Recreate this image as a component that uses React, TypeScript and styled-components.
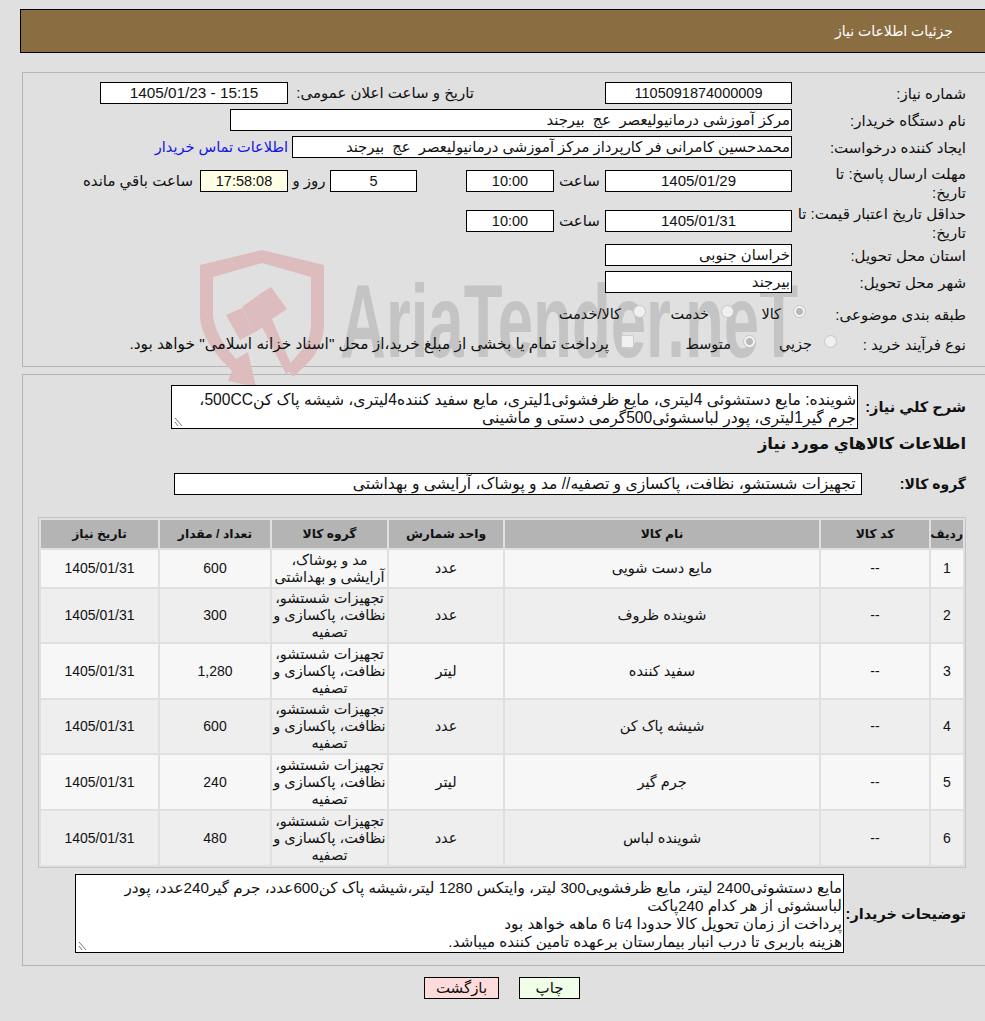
import React from "react";
import styled, { createGlobalStyle } from "styled-components";

const GlobalStyle = createGlobalStyle`
  html, body {
    margin: 0;
    padding: 0;
    background: #e0e0e0;
  }
  body {
    font-family: "Liberation Sans", "DejaVu Sans", sans-serif;
    font-size: 14.5px;
    color: #111;
  }
`;

const Page = styled.div`
  position: relative;
  width: 985px;
  height: 1021px;
  overflow: hidden;
  direction: rtl;
  padding-top: 9px;
  box-sizing: border-box;
`;

const Header = styled.header`
  height: 44px;
  margin-left: 20px;
  background: #8b6d42;
  border: 1px solid #000;
  border-right: none;
  box-sizing: border-box;
  color: #fff;
  display: flex;
  align-items: center;
  padding-right: 32px;
  font-size: 14px;
`;

const Panel = styled.section<{ $top: number; $height: number }>`
  margin: ${({ $top }) => $top}px 0 0 22px;
  height: ${({ $height }) => $height}px;
  box-sizing: border-box;
  border: 1px solid #b4b4b4;
  border-right: none;
  padding-right: 19px;
`;

const Row = styled.div<{ $top: number; $height?: number }>`
  display: flex;
  align-items: center;
  margin-top: ${({ $top }) => $top}px;
  height: ${({ $height }) => $height ?? 22}px;
`;

const Label = styled.div<{ $width?: number; $wrapped?: boolean }>`
  width: ${({ $width }) => $width ?? 174}px;
  flex: none;
  box-sizing: border-box;
  margin-top: ${({ $wrapped }) => ($wrapped ? 4 : 0)}px;
  line-height: 19px;
  font-size: 15px;
  white-space: nowrap;
`;

const BoldLabel = styled.div<{ $width: number; $size?: number }>`
  width: ${({ $width }) => $width}px;
  flex: none;
  font-weight: 700;
  font-size: ${({ $size }) => $size ?? 14.5}px;
  white-space: nowrap;
`;

const Field = styled.div<{ $width: number; $center?: boolean; $bg?: string; $mr?: number; $size?: number }>`
  width: ${({ $width }) => $width}px;
  height: 22px;
  flex: none;
  box-sizing: border-box;
  border: 1px solid #000;
  background: ${({ $bg }) => $bg ?? "#fff"};
  text-align: ${({ $center }) => ($center ? "center" : "right")};
  line-height: 20px;
  padding: 0 1px;
  margin-right: ${({ $mr }) => $mr ?? 0}px;
  font-size: ${({ $size, $center }) => $size ?? ($center ? 14.5 : 14.8)}px;
  white-space: pre;
  overflow: hidden;
`;

const Caption = styled.span<{ $width?: number; $mr?: number; $start?: boolean }>`
  flex: none;
  white-space: nowrap;
  font-size: 15px;
  width: ${({ $width }) => ($width ? `${$width}px` : "auto")};
  text-align: ${({ $start }) => ($start ? "right" : "center")};
  margin-right: ${({ $mr }) => $mr ?? 0}px;
`;

const ContactLink = styled.a`
  color: #1414e6;
  margin-right: 4px;
  font-size: 14.5px;
  white-space: nowrap;
`;

const RadioItem = styled.label<{ $width: number; $size?: number }>`
  display: flex;
  align-items: center;
  width: ${({ $width }) => $width}px;
  flex: none;
  gap: 12px;
  white-space: nowrap;
  font-size: ${({ $size }) => $size ?? 14.5}px;
`;

const RadioDot = styled.span<{ $checked?: boolean }>`
  width: 13px;
  height: 13px;
  flex: none;
  margin-bottom: 5px;
  box-sizing: border-box;
  border-radius: 50%;
  border: 1px solid #c6c6c6;
  background: ${({ $checked }) =>
    $checked ? "radial-gradient(circle, #b8b8b8 0 3px, #f2f2f2 4px)" : "#f0f0f0"};
`;

const CheckBox = styled.span`
  width: 13px;
  height: 13px;
  flex: none;
  margin-bottom: 5px;
  box-sizing: border-box;
  border-radius: 2px;
  border: 1px solid #cccccc;
  background: #f0f0f0;
`;

const Watermark = styled.svg`
  position: absolute;
  left: 180px;
  top: 235px;
  pointer-events: none;
`;

const Content = styled.div`
  position: relative;
`;

const TextBox = styled.div<{ $width: number; $height: number; $pad: number; $size: number }>`
  position: relative;
  width: ${({ $width }) => $width}px;
  height: ${({ $height }) => $height}px;
  flex: none;
  box-sizing: border-box;
  border: 1px solid #000;
  background: #fff;
  padding: ${({ $pad }) => $pad}px 1px 0;
  font-size: ${({ $size }) => $size}px;
  line-height: 18px;
  overflow: hidden;
`;

const Grip = styled.svg`
  position: absolute;
  left: 1px;
  bottom: 1px;
`;

const SectionTitle = styled.div`
  font-weight: 700;
  font-size: 16.4px;
  margin-top: 4px;
  height: 20px;
  line-height: 20px;
  white-space: nowrap;
`;

const Table = styled.table`
  margin: 22px 0 0 0;
  width: 928px;
  box-sizing: border-box;
  border: 1px solid #c4c4c4;
  border-spacing: 2px;
  table-layout: fixed;
  font-size: 14.5px;
`;

const Th = styled.th<{ $width: number }>`
  width: ${({ $width }) => $width}px;
  height: 28px;
  padding: 0;
  background: #b4b4b4;
  font-size: 12.3px;
  font-weight: 700;
`;

const Tr = styled.tr<{ $alt: boolean; $h: number }>`
  height: ${({ $h }) => $h}px;
  background: ${({ $alt }) => ($alt ? "#eeeeee" : "#f7f7f7")};
`;

const Td = styled.td<{ $size?: number }>`
  padding: 0;
  text-align: center;
  line-height: 17px;
  font-size: ${({ $size }) => $size ?? 14.5}px;
`;

const Footer = styled.div`
  display: flex;
  justify-content: center;
  gap: 20px;
  margin-top: 11px;
  padding-left: 19px;
`;

const Button = styled.button<{ $bg: string; $width: number }>`
  width: ${({ $width }) => $width}px;
  height: 22px;
  padding: 0;
  box-sizing: border-box;
  border: 1px solid #000;
  background: ${({ $bg }) => $bg};
  font: inherit;
  font-size: 15px;
  color: #111;
`;

const cleaning = "تجهیزات شستشو، نظافت، پاکسازی و تصفیه";

const items = [
  { name: "مایع دست شویی", unit: "عدد", qty: "600", group: "مد و پوشاک، آرایشی و بهداشتی", h: 37 },
  { name: "شوینده ظروف", unit: "عدد", qty: "300", group: cleaning, h: 53 },
  { name: "سفید کننده", unit: "لیتر", qty: "1,280", group: cleaning, h: 54 },
  { name: "شیشه پاک کن", unit: "عدد", qty: "600", group: cleaning, h: 53 },
  { name: "جرم گیر", unit: "لیتر", qty: "240", group: cleaning, h: 54 },
  { name: "شوینده لباس", unit: "عدد", qty: "480", group: cleaning, h: 54 },
];

const ResizeGrip = () => (
  <Grip width="11" height="11" viewBox="0 0 11 11">
    <path d="M2 2 L9 10 M2 6 L5 10" stroke="#777" fill="none" />
  </Grip>
);

const App: React.FC = () => {
  return (
    <Page>
      <GlobalStyle />
      <Watermark width="640" height="160" viewBox="0 0 640 160">
        {/* shield band with the arrow at its foot */}
        <path
          d="M20 30 L82 15 L144 30 L144 92 C142 118 128 128 113 142 L106 132 C120 118 131 108 131 88 L131 42 L82 28 L33 42 L33 80 C35 100 48 115 56 124 L68 117 L76 152 L48 146 L52 136 C38 122 20 102 20 80 Z"
          fill="#dcbcbc"
        />
        {/* gavel */}
        <path
          d="M46 80 L62 73 L75 97 L60 105 Z M62 72 L77 61 L92 87 L75 97 Z M78 60 L91 52 L107 74 L92 84 L113 134 L106 139 L82 92 Z"
          fill="#dcbcbc"
        />
        <text
          x="160"
          y="122"
          fill="#c4c4c4"
          fontFamily="'Liberation Sans', sans-serif"
          fontWeight="700"
          fontSize="103"
          textLength="458"
          lengthAdjust="spacingAndGlyphs"
          direction="ltr"
        >
          AriaTender.neT
        </text>
      </Watermark>
      <Header>جزئیات اطلاعات نیاز</Header>

      <Panel $top={19} $height={295}>
        <Content>
          <Row $top={9}>
            <Label>شماره نیاز:</Label>
            <Field $width={187} $center>1105091874000009</Field>
            <Caption $width={186} $mr={131} $start>تاریخ و ساعت اعلان عمومی:</Caption>
            <Field $width={188} $center $size={15.3}>15:15 - 1405/01/23</Field>
          </Row>
          <Row $top={5}>
            <Label>نام دستگاه خریدار:</Label>
            <Field $width={562}>مرکز آموزشی درمانیولیعصر  عج  بیرجند</Field>
          </Row>
          <Row $top={5}>
            <Label>ایجاد کننده درخواست:</Label>
            <Field $width={500}>محمدحسین کامرانی فر کارپرداز مرکز آموزشی درمانیولیعصر  عج  بیرجند</Field>
            <ContactLink>اطلاعات تماس خریدار</ContactLink>
          </Row>
          <Row $top={12}>
            <Label $wrapped>مهلت ارسال پاسخ: تا<br />تاریخ:</Label>
            <Field $width={187} $center $size={15}>1405/01/29</Field>
            <Caption $width={51}>ساعت</Caption>
            <Field $width={88} $center>10:00</Field>
            <Field $width={87} $center $mr={49}>5</Field>
            <Caption $width={42}>روز و</Caption>
            <Field $width={88} $center $bg="#ffffe6">17:58:08</Field>
            <Caption $mr={7}>ساعت باقي مانده</Caption>
          </Row>
          <Row $top={18}>
            <Label $wrapped>حداقل تاریخ اعتبار قیمت: تا<br />تاریخ:</Label>
            <Field $width={187} $center $size={15}>1405/01/31</Field>
            <Caption $width={51}>ساعت</Caption>
            <Field $width={88} $center>10:00</Field>
          </Row>
          <Row $top={12}>
            <Label>استان محل تحویل:</Label>
            <Field $width={187}>خراسان جنوبی</Field>
          </Row>
          <Row $top={5}>
            <Label>شهر محل تحویل:</Label>
            <Field $width={187}>بیرجند</Field>
          </Row>
          <Row $top={10}>
            <Label $width={160}>طبقه بندی موضوعی:</Label>
            <RadioItem $width={72}><RadioDot $checked />کالا</RadioItem>
            <RadioItem $width={88}><RadioDot />خدمت</RadioItem>
            <RadioItem $width={100}><RadioDot />کالا/خدمت</RadioItem>
          </Row>
          <Row $top={8}>
            <Label $width={129}>نوع فرآیند خرید :</Label>
            <RadioItem $width={81}><RadioDot />جزیي</RadioItem>
            <RadioItem $width={122}><RadioDot $checked />متوسط</RadioItem>
            <RadioItem $width={510} $size={15.4}><CheckBox />پرداخت تمام یا بخشی از مبلغ خرید،از محل "اسناد خزانه اسلامی" خواهد بود.</RadioItem>
          </Row>
        </Content>
      </Panel>

      <Panel $top={7} $height={592}>
        <Content>
          <Row $top={10} $height={44}>
            <BoldLabel $width={108}>شرح کلي نیاز:</BoldLabel>
            <TextBox $width={687} $height={44} $pad={5} $size={15.6}>
              شوینده: مایع دستشوئی 4لیتری، مایع ظرفشوئی1لیتری، مایع سفید کننده4لیتری، شیشه پاک کن500CC، جرم گیر1لیتری، پودر لباسشوئی500گرمی دستی و ماشینی
              <ResizeGrip />
            </TextBox>
          </Row>
          <SectionTitle>اطلاعات کالاهاي مورد نیاز</SectionTitle>
          <Row $top={20}>
            <BoldLabel $width={104} $size={14}>گروه کالا:</BoldLabel>
            <Field $width={688} $size={15.6}>{" تجهیزات شستشو، نظافت، پاکسازی و تصفیه// مد و پوشاک، آرایشی و بهداشتی"}</Field>
          </Row>
          <Table>
            <thead>
              <tr>
                <Th $width={32}>ردیف</Th>
                <Th $width={108}>کد کالا</Th>
                <Th $width={314}>نام کالا</Th>
                <Th $width={114}>واحد شمارش</Th>
                <Th $width={115}>گروه کالا</Th>
                <Th $width={110}>تعداد / مقدار</Th>
                <Th $width={117}>تاریخ نیاز</Th>
              </tr>
            </thead>
            <tbody>
              {items.map((item, i) => (
                <Tr key={item.name} $alt={i % 2 === 1} $h={item.h}>
                  <Td $size={14}>{i + 1}</Td>
                  <Td $size={14}>--</Td>
                  <Td>{item.name}</Td>
                  <Td>{item.unit}</Td>
                  <Td $size={14.5}>{item.group}</Td>
                  <Td $size={14}>{item.qty}</Td>
                  <Td $size={14}>1405/01/31</Td>
                </Tr>
              ))}
            </tbody>
          </Table>
          <Row $top={6} $height={79}>
            <BoldLabel $width={122}>توضیحات خریدار:</BoldLabel>
            <TextBox $width={769} $height={79} $pad={4} $size={15.2}>
              مایع دستشوئی2400 لیتر، مایع ظرفشویی300 لیتر، وایتکس 1280 لیتر،شیشه پاک کن600عدد، جرم گیر240عدد، پودر لباسشوئی از هر کدام 240پاکت
              <br />
              پرداخت از زمان تحویل کالا حدودا  4تا 6 ماهه خواهد بود
              <br />
              هزینه باربری تا درب انبار بیمارستان برعهده تامین کننده میباشد.
              <ResizeGrip />
            </TextBox>
          </Row>
        </Content>
      </Panel>

      <Footer>
        <Button $bg="#f0ffe8" $width={61}>چاپ</Button>
        <Button $bg="#ffdcdc" $width={75}>بازگشت</Button>
      </Footer>
    </Page>
  );
};

export default App;
